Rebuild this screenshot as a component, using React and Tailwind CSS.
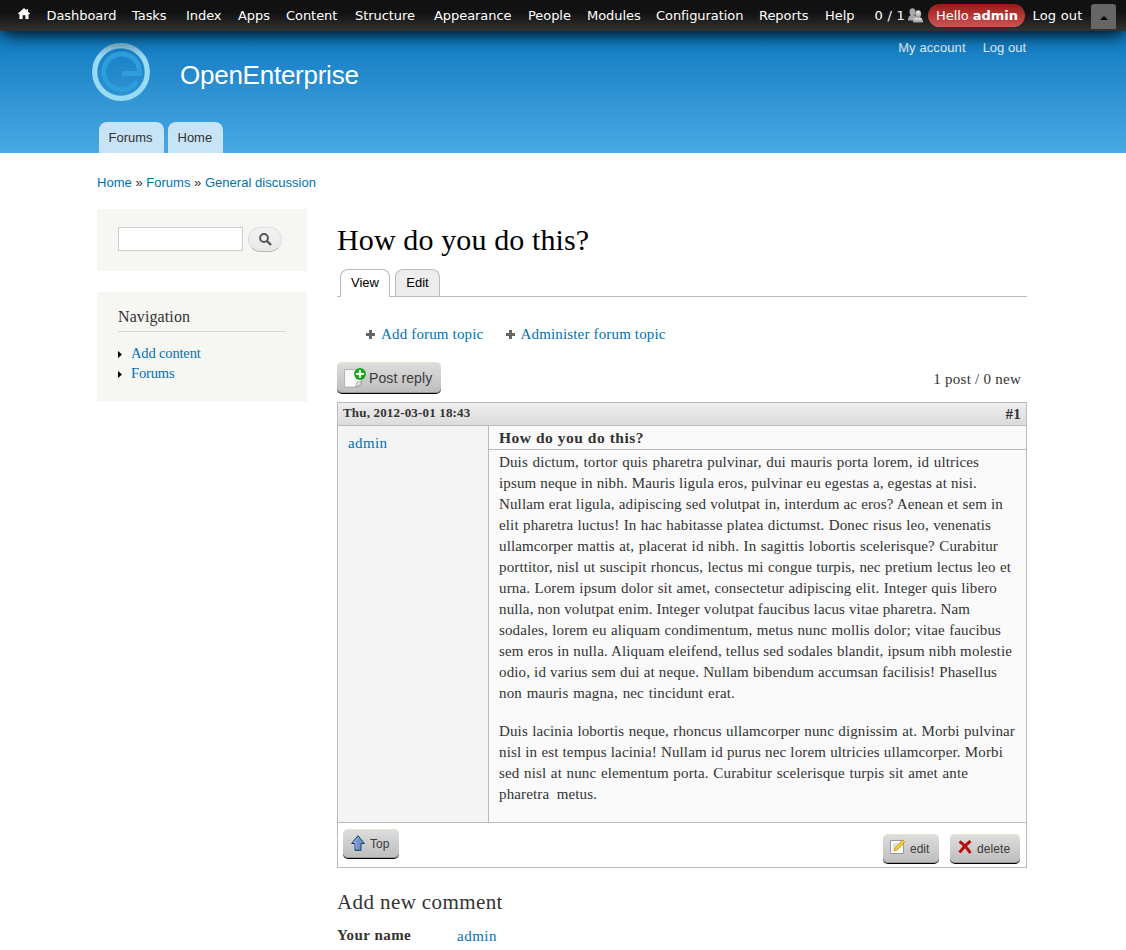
import React from "react";

const menu = [
  ["Dashboard", "w-[85.5px]"],
  ["Tasks", "w-[54px]"],
  ["Index", "w-[52px]"],
  ["Apps", "w-[48px]"],
  ["Content", "w-[69px]"],
  ["Structure", "w-[79px]"],
  ["Appearance", "w-[94px]"],
  ["People", "w-[59px]"],
  ["Modules", "w-[69px]"],
  ["Configuration", "w-[103px]"],
  ["Reports", "w-[66px]"],
  ["Help", "w-[49.5px]"],
];

const first = [
  ["Duis dictum, tortor quis pharetra pulvinar, dui mauris porta lorem, id ultrices", "w-[480px]"],
  ["ipsum neque in nibh. Mauris ligula eros, pulvinar eu egestas a, egestas at nisi.", "w-[478px]"],
  ["Nullam erat ligula, adipiscing sed volutpat in, interdum ac eros? Aenean et sem in", "w-[504px]"],
  ["elit pharetra luctus! In hac habitasse platea dictumst. Donec risus leo, venenatis", "w-[492px]"],
  ["ullamcorper mattis at, placerat id nibh. In sagittis lobortis scelerisque? Curabitur", "w-[499px]"],
  ["porttitor, nisl ut suscipit rhoncus, lectus mi congue turpis, nec pretium lectus leo et", "w-[512px]"],
  ["urna. Lorem ipsum dolor sit amet, consectetur adipiscing elit. Integer quis libero", "w-[498px]"],
  ["nulla, non volutpat enim. Integer volutpat faucibus lacus vitae pharetra. Nam", "w-[470px]"],
  ["sodales, lorem eu aliquam condimentum, metus nunc mollis dolor; vitae faucibus", "w-[502px]"],
  ["sem eros in nulla. Aliquam eleifend, tellus sed sodales blandit, ipsum nibh molestie", "w-[513px]"],
  ["odio, id varius sem dui at neque. Nullam bibendum accumsan facilisis! Phasellus", "w-[498px]"],
  ["non mauris magna, nec tincidunt erat.", "w-[236px]"],
];

const second = [
  ["Duis lacinia lobortis neque, rhoncus ullamcorper nunc dignissim at. Morbi pulvinar", "w-[516px]"],
  ["nisl in est tempus lacinia! Nullam id purus nec lorem ultricies ullamcorper. Morbi", "w-[504px]"],
  ["sed nisl at nunc elementum porta. Curabitur scelerisque turpis sit amet ante", "w-[469px]"],
  ["pharetra metus.", "w-[98px]"],
];

function Paragraph({ lines }) {
  return (
    <p className="text-[15px] leading-[21px] tracking-[0.13px]">
      {lines.map(([text, width]) => (
        <span key={text} className={`block whitespace-nowrap [text-align-last:justify] ${width}`}>
          {text}
        </span>
      ))}
    </p>
  );
}

function Logo() {
  return (
    <svg width="58" height="58" viewBox="0 0 58 58" fill="none">
      <defs>
        <linearGradient id="ring" x1="0" y1="0" x2="0" y2="1">
          <stop offset="0" stopColor="#7fb9d3" />
          <stop offset="0.22" stopColor="#99daf5" />
        </linearGradient>
      </defs>
      <circle cx="29" cy="29" r="26.3" stroke="url(#ring)" strokeWidth="5.2" />
      <path d="M30 30.5h17.3A17.8 17.8 0 1 0 44.500 38.500" stroke="#2d9ddb" strokeWidth="5" />
    </svg>
  );
}

function PostIcon() {
  return (
    <svg width="22" height="20" viewBox="0 0 22 20">
      <defs>
        <linearGradient id="paper" x1="0" y1="0" x2="1" y2="1">
          <stop stopColor="#f4f4f4" />
          <stop offset="1" stopColor="#fff" />
        </linearGradient>
      </defs>
      <path d="M.5 1.500h17v11.500c-.5 3.500-2.500 5.500-6 6H.5z" fill="url(#paper)" stroke="#a8a8a8" strokeWidth=".8" />
      <path d="M17.500 13.500c-2 .2-4 .5-4.500 1s-.4 2.500-1.500 4.500c3.500-.5 5.500-2.500 6-5.500z" fill="#e8e8e8" stroke="#8c8c8c" strokeWidth=".8" />
      <circle cx="16" cy="6" r="5.900" fill="#12a612" />
      <path d="M16 2v8M12 6h8" stroke="#fff" strokeWidth="2.200" />
    </svg>
  );
}

function Plus() {
  return (
    <svg width="9" height="9" viewBox="0 0 9 9" className="mt-px mr-[6px]">
      <path d="M3 0h3v3h3v3H6v3H3V6H0V3h3z" fill="#666" />
    </svg>
  );
}

const button =
  "flex items-center rounded-[5px] border-b border-black bg-linear-to-b from-[#dedede] to-[#bdbdbd] font-['Liberation_Sans',sans-serif] text-[#3b3b3b] shadow-[inset_0_1px_0_#dcebd0,inset_0_-1px_0_#999]";
const block = "bg-[#f6f6f2] w-[210px] px-[21px]";
const link = "text-[#0071b3]";

export default function App() {
  return (
    <div className="h-[950px] w-[1126px] overflow-hidden bg-white font-['Liberation_Serif',serif] text-[#333]">
      <nav className="relative z-10 flex h-[31px] items-center bg-linear-to-b from-[#111] from-40% to-[#333] font-['DejaVu_Sans',sans-serif] text-[13px] whitespace-nowrap text-white shadow-[0_5px_18px_-2px_#000]">
        <svg width="12" height="11" viewBox="0 0 12 11" className="mr-[17px] mb-[5px] ml-[17.500px]">
          <path d="M6 0 0 5.500V6h1.400v5h3.200V7.300h2.800V11h3.200V6H12v-.5L10 3.700V1H8.600v1.400z" fill="#fff" />
        </svg>
        {menu.map(([label, width]) => (
          <span key={label} className={`${width} shrink-0 tracking-[-0.06px]`}>{label}</span>
        ))}
        <span className="w-[34px] tracking-[0.3px]">0 / 1</span>
        <svg width="15" height="15" viewBox="0 0 15 15" className="-ml-px">
          <defs>
            <linearGradient id="user" x1="0" y1="0" x2="0" y2="1">
              <stop stopColor="#f4f4f4" />
              <stop offset="1" stopColor="#999" />
            </linearGradient>
          </defs>
          <g fill="#a8a8a8">
            <ellipse cx="4.500" cy="4" rx="3" ry="3.700" />
            <path d="M0 12.500c0-4 2-5.500 4.500-5.500S9 9 9 12.500z" />
          </g>
          <g fill="url(#user)">
            <path d="M5 14.500c0-4 2-5.500 5-5.500s5 1.500 5 5.500z" />
            <ellipse cx="10.200" cy="6" rx="2.900" ry="3.700" stroke="#777" strokeWidth=".4" />
          </g>
        </svg>
        <span className="ml-[5.500px] flex h-[23px] w-[97px] items-center rounded-full bg-linear-to-b from-[#991818] to-[#cf5353] pl-[8px]">
          <span className="tracking-[-0.05px]">Hello <b>admin</b></span>
        </span>
        <span className="ml-[7.500px] w-[58.500px] tracking-[0.2px]">Log out</span>
        <span className="mt-[2px] flex h-[25px] w-[25px] items-center justify-center rounded-t-[3px] bg-[#666]">
          <svg width="8" height="4" viewBox="0 0 8 4" className="mt-[3px]"><path d="M4 0l4 4H0z" /></svg>
        </span>
      </nav>

      <header className="flex h-[122px] flex-col bg-linear-to-b from-[#0779bf] to-[#48a9e4] font-['Liberation_Sans',sans-serif]">
        <div className="flex h-[91px] items-start pl-[92px]">
          <div className="mt-[12px]"><Logo /></div>
          <div className="mt-[29px] ml-[30px] text-[26px] leading-[30px] tracking-[-0.25px] text-white">OpenEnterprise</div>
          <div className="mt-[8px] ml-auto flex gap-[17px] pr-[100px] text-[13px] leading-[17px] text-[#e2f1fa]">
            <span className="tracking-[0.1px]">My account</span>
            <span>Log out</span>
          </div>
        </div>
        <div className="flex gap-[4px] pl-[99px] text-[13px] leading-[31px] text-[#333]">
          <span className="h-[31px] w-[65px] rounded-t-[8px] bg-[#c7e3f6] pl-[9.500px]">Forums</span>
          <span className="h-[31px] w-[55px] rounded-t-[8px] bg-[#c7e3f6] pl-[9.500px]">Home</span>
        </div>
      </header>

      <div className="mt-[21px] ml-[97px] h-[35px] font-['Liberation_Sans',sans-serif] text-[13px] leading-[17px] tracking-[0.02px]">
        <span className={link}>Home</span> » <span className={link}>Forums</span> » <span className={link}>General discussion</span>
      </div>

      <div className="flex pl-[97px]">
        <aside className="flex w-[240px] flex-col gap-[21px]">
          <section className={`${block} flex h-[62px] pt-[18px]`}>
            <div className="h-[24px] w-[125px] border border-[#ccc] bg-white" />
            <div className="ml-[5px] flex h-[25px] w-[34px] items-center justify-center rounded-full border border-[#ddd] border-b-[#b4b4b4] bg-linear-to-b from-[#f3f3f3] to-[#e8e8e8]">
              <svg width="13" height="13" viewBox="0 0 13 13" fill="none" stroke="#555">
                <circle cx="5" cy="5" r="3.900" strokeWidth="2" />
                <path d="M8 8l4 4" strokeWidth="2.400" />
              </svg>
            </div>
          </section>
          <section className={`${block} h-[110px] pt-[13px]`}>
            <h2 className="h-[27px] border-b border-[#d6d6d6] text-[16px] leading-[23px] tracking-[0.1px]">Navigation</h2>
            <ul className="mt-[11px] text-[14.500px] leading-[20px] tracking-[-0.15px]">
              {["Add content", "Forums"].map((t) => (
                <li key={t} className={`flex items-center ${link}`}>
                  <svg width="4" height="7" viewBox="0 0 4 7" className="mt-[3px] mr-[9px]"><path d="M0 0l4 3.500L0 7z" fill="#000" /></svg>
                  {t}
                </li>
              ))}
            </ul>
          </section>
        </aside>

        <main className="w-[690px]">
          <h1 className="mt-[12px] h-[48px] text-[30px] leading-[38px] tracking-[0.12px] text-black">How do you do this?</h1>
          <div className="flex h-[28px] border-b border-[#bbb] pl-[3px] font-['Liberation_Sans',sans-serif] text-[13px] leading-[26px] text-black">
            <span className="h-[28px] w-[50px] rounded-t-[8px] border border-b-0 border-[#bbb] bg-white text-center">View</span>
            <span className="ml-[5px] h-[27px] w-[45px] rounded-t-[8px] border border-b-0 border-[#bbb] bg-[#ededed] text-center">Edit</span>
          </div>
          <div className={`mt-[27px] flex pl-[29px] text-[15px] leading-[20px] tracking-[0.16px] ${link}`}>
            <span className="flex w-[139.500px] items-center"><Plus />Add forum topic</span>
            <span className="flex items-center"><Plus />Administer forum topic</span>
          </div>
          <div className="mt-[18px] flex h-[40px] justify-between">
            <div className={`${button} h-[32px] w-[104px] pl-[7px] text-[14px]`}>
              <PostIcon /><span className="mt-px ml-[3px] tracking-[0.1px]">Post reply</span>
            </div>
            <span className="mt-[7px] mr-[6px] text-[15px] leading-[20px] tracking-[0.25px]">1 post / 0 new</span>
          </div>

          <article className="flex h-[466px] flex-col border border-[#bbb]">
            <div className="flex h-[23px] justify-between border-b border-[#bbb] bg-linear-to-b from-[#eee] to-[#dcdcdc] px-[5px] font-bold">
              <span className="text-[13px] leading-[20px] tracking-[0.17px]">Thu, 2012-03-01 18:43</span>
              <span className="text-[15px] leading-[22px] tracking-[0.3px]">#1</span>
            </div>
            <div className="flex h-[397px] border-b border-[#bbb]">
              <div className={`w-[151px] border-r border-[#bbb] bg-[#f4f4f4] pt-[7px] pl-[10px] text-[15px] leading-[20px] tracking-[0.4px] ${link}`}>admin</div>
              <div className="flex-1 bg-[#fafafa]">
                <h3 className="h-[24px] border-b border-[#bbb] pl-[10px] text-[15.500px] leading-[23px] font-bold tracking-[0.52px]">How do you do this?</h3>
                <div className="flex flex-col gap-[17px] pt-[2px] pl-[10px]">
                  <Paragraph lines={first} />
                  <Paragraph lines={second} />
                </div>
              </div>
            </div>
            <div className="flex pr-[6px] pl-[5px]">
              <div className={`${button} mt-[6px] h-[30px] w-[56px] pl-[8px] text-[12px]`}>
                <svg width="14" height="16" viewBox="0 0 14 16" className="-mt-px"><path d="M7 .7 13.400 8.500H10v6.800H4V8.500H.6z" fill="#6f94ca" stroke="#1d3b6e" /><path d="M7 2.500 2.800 7.500H5V14" stroke="#a5c1e5" fill="none" strokeWidth=".9" /></svg>
                <span className="mt-px ml-[5px] tracking-[0.1px]">Top</span>
              </div>
              <div className={`${button} mt-[11px] ml-auto h-[30px] w-[56px] pl-[7px] text-[12px]`}>
                <svg width="16" height="16" viewBox="0 0 16 16" className="-mt-[3px]">
                  <path d="M.5 1.500h13v13H.5z" fill="#f8f8f8" stroke="#999" />
                  <path d="M3 5h5M3 7h3M3 9h2M3 11h1" stroke="#ccc" />
                  <path d="M4 12l1.200-3.500L12.500 1l2.300 2-7.300 7.700z" fill="#f6cc2c" stroke="#b98b16" strokeWidth=".7" />
                </svg>
                <span className="ml-[4px]">edit</span>
              </div>
              <div className={`${button} mt-[11px] ml-[11px] h-[30px] w-[70px] pl-[8px] text-[12px]`}>
                <svg width="14" height="14" viewBox="0 0 14 14" className="-mt-[3px]"><path d="M1.500 1.500Q7 5 12.500 13M12.500 1Q6 6 1.500 12.500" fill="none" stroke="#b50e0e" strokeWidth="3" /></svg>
                <span className="ml-[5px] tracking-[0.1px]">delete</span>
              </div>
            </div>
          </article>

          <h2 className="mt-[20px] text-[21px] leading-[28px] tracking-[0.4px]">Add new comment</h2>
          <div className="mt-[10px] flex text-[15px] leading-[20px]">
            <b className="-mt-px w-[120px] tracking-[0.45px]">Your name</b>
            <span className={`${link} tracking-[0.5px]`}>admin</span>
          </div>
        </main>
      </div>
    </div>
  );
}
